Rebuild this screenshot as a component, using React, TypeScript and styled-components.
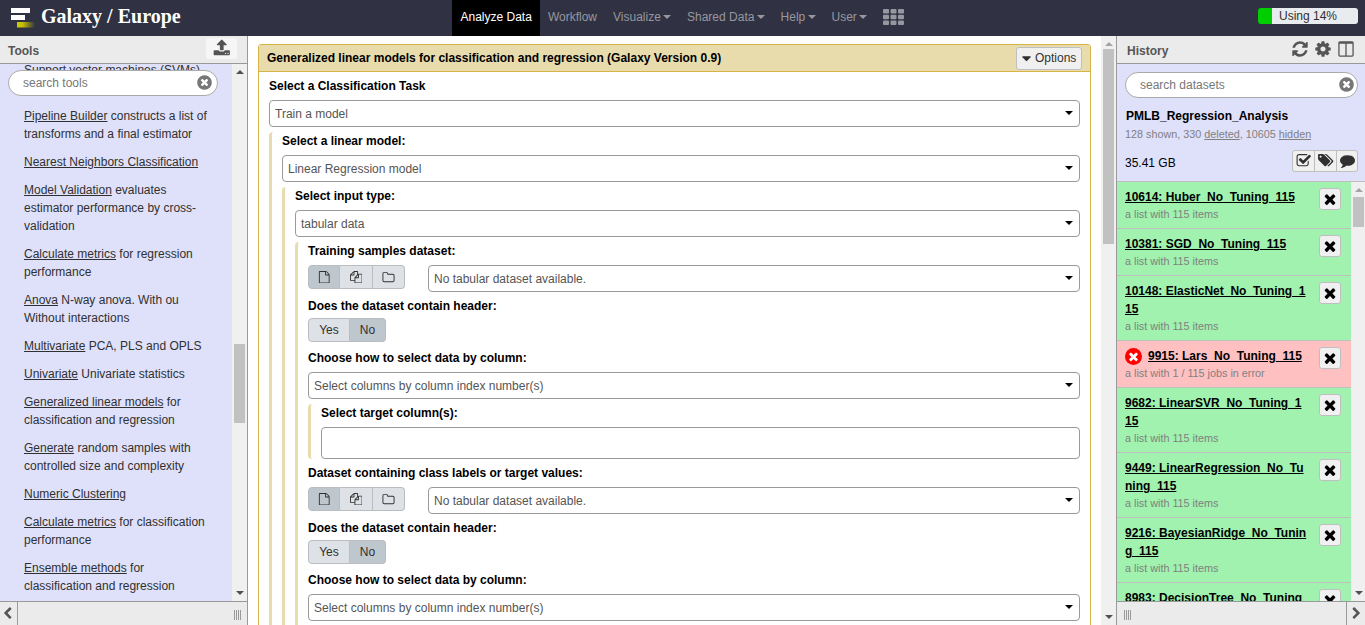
import React from "react";
import styled, { createGlobalStyle, css } from "styled-components";

const GlobalStyle = createGlobalStyle`
  *, *::before, *::after { box-sizing: border-box; }
  html, body { margin: 0; padding: 0; height: 100%; overflow: hidden; }
  body {
    background: #fff;
    color: #303030;
    font-family: "Liberation Sans", Arial, sans-serif;
    font-size: 12px;
    line-height: 18px;
  }
`;

/* ---------- icons ---------- */

const paths = {
  file: "M1596 380q28 28 48 76t20 88v1152q0 40-28 68t-68 28h-1344q-40 0-68-28t-28-68v-1600q0-40 28-68t68-28h896q40 0 88 20t76 48zm-444-244v376h376q-10-29-22-41l-313-313q-12-12-41-22zm384 1528v-1024h-416q-40 0-68-28t-28-68v-416h-768v1536h1280z",
  files: "M1696 384q40 0 68 28t28 68v1216q0 40-28 68t-68 28h-960q-40 0-68-28t-28-68v-288h-544q-40 0-68-28t-28-68v-672q0-40 20-88t48-76l408-408q28-28 76-48t88-20h416q40 0 68 28t28 68v328q68-40 128-40h416zm-544 213l-299 299h299v-299zm-640-384l-299 299h299v-299zm196 647l316-316v-416h-384v416q0 40-28 68t-68 28h-416v640h512v-256q0-40 20-88t48-76zm956 804v-1152h-384v416q0 40-28 68t-68 28h-416v640h896z",
  folder: "M1600 1312v-704q0-40-28-68t-68-28h-704q-40 0-68-28t-28-68v-64q0-40-28-68t-68-28h-320q-40 0-68 28t-28 68v960q0 40 28 68t68 28h1216q40 0 68-28t28-68zm128-704v704q0 92-66 158t-158 66h-1216q-92 0-158-66t-66-158v-960q0-92 66-158t158-66h320q92 0 158 66t66 158v32h672q92 0 158 66t66 158z",
  refresh: "M1639 1056q0 5-1 7-64 268-268 434.5t-478 166.5q-146 0-282.5-55t-243.5-157l-129 129q-19 19-45 19t-45-19-19-45v-448q0-26 19-45t45-19h448q26 0 45 19t19 45-19 45l-137 137q71 66 161 102t187 36q134 0 250-65t186-179q11-17 53-117 8-23 30-23h192q13 0 22.5 9.5t9.5 22.5zm25-800v448q0 26-19 45t-45 19h-448q-26 0-45-19t-19-45 19-45l138-138q-148-137-349-137-134 0-250 65t-186 179q-11 17-53 117-8 23-30 23h-199q-13 0-22.5-9.5t-9.5-22.5v-7q65-268 270-434.5t480-166.5q146 0 284 55.5t245 156.5l130-129q19-19 45-19t45 19 19 45z",
  cog: "M1152 896q0-106-75-181t-181-75-181 75-75 181 75 181 181 75 181-75 75-181zm512-109v222q0 12-8 23t-20 13l-185 28q-19 54-39 91 35 50 107 138 10 12 10 25t-9 23q-27 37-99 108t-94 71q-12 0-26-9l-138-108q-44 23-91 38-16 136-29 186-7 28-36 28h-222q-14 0-24.5-8.5t-11.5-21.5l-28-184q-49-16-90-37l-141 107q-10 9-25 9-14 0-25-11-126-114-165-168-7-10-7-23 0-12 8-23 15-21 51-66.5t54-70.5q-27-50-41-99l-183-27q-13-2-21-12.5t-8-23.5v-222q0-12 8-23t19-13l186-28q14-46 39-92-40-57-107-138-10-12-10-24 0-10 9-23 26-36 98.5-107.5t94.5-71.5q13 0 26 10l138 107q44-23 91-38 16-136 29-186 7-28 36-28h222q14 0 24.5 8.5t11.5 21.5l28 184q49 16 90 37l142-107q9-9 24-9 13 0 25 10 129 119 165 170 7 8 7 22 0 12-8 23-15 21-51 66.5t-54 70.5q26 50 41 98l183 28q13 2 21 12.5t8 23.5z",
  columns: "M288 1536h544v-1152h-576v1120q0 13 9.5 22.5t22.5 9.5zm1248-32v-1120h-576v1152h544q13 0 22.5-9.5t9.5-22.5zm128-1216v1216q0 66-47 113t-113 47h-1216q-66 0-113-47t-47-113v-1216q0-66 47-113t113-47h1216q66 0 113 47t47 113z",
  times: "M1490 1322q0 40-28 68l-136 136q-28 28-68 28t-68-28l-294-294-294 294q-28 28-68 28t-68-28l-136-136q-28-28-28-68t28-68l294-294-294-294q-28-28-28-68t28-68l136-136q28-28 68-28t68 28l294 294 294-294q28-28 68-28t68 28l136 136q28 28 28 68t-28 68l-294 294 294 294q28 28 28 68z",
  timesCircle: "M1277 1122q0-26-19-45l-181-181 181-181q19-19 19-45 0-27-19-46l-90-90q-19-19-46-19-26 0-45 19l-181 181-181-181q-19-19-45-19-27 0-46 19l-90 90q-19 19-19 46 0 26 19 45l181 181-181 181q-19 19-19 45 0 27 19 46l90 90q19 19 46 19 26 0 45-19l181-181 181 181q19 19 45 19 27 0 46-19l90-90q19-19 19-46zm387-226q0 209-103 385.5t-279.5 279.5-385.5 103-385.5-103-279.5-279.5-103-385.5 103-385.5 279.5-279.5 385.5-103 385.5 103 279.5 279.5 103 385.5z",
  tags: "M576 448q0-53-37.5-90.5t-90.5-37.5-90.5 37.5-37.5 90.5 37.5 90.5 90.5 37.5 90.5-37.5 37.5-90.5zm1067 576q0 53-37 90l-491 492q-39 37-91 37-53 0-90-37l-715-716q-38-37-64.5-101t-26.5-117v-416q0-52 38-90t90-38h416q53 0 117 26.5t102 64.5l715 714q37 39 37 91zm384 0q0 53-37 90l-491 492q-39 37-91 37-36 0-59-14t-53-45l470-470q37-37 37-90 0-52-37-91l-715-714q-38-38-102-64.5t-117-26.5h224q53 0 117 26.5t102 64.5l715 714q37 39 37 91z",
  comment: "M1792 896q0 174-120 321.5t-326 233-450 85.5q-70 0-145-8-198 175-460 242-49 14-114 22-17 2-30.5-9t-17.5-29v-1q-3-4-.5-12t2-10 4.5-9.5l6-9 7-8.5 8-9q7-8 31-34.5t34.5-38 31-39.5 32.5-51 27-59 26-76q-157-89-247.5-220t-90.5-281q0-130 71-248.5t191-204.5 286-136.5 348-50.5q244 0 450 85.5t326 233 120 321.5z",
  checkSquare: "M1472 930v318q0 119-84.5 203.5t-203.5 84.5h-832q-119 0-203.5-84.5t-84.5-203.5v-832q0-119 84.5-203.5t203.5-84.5h832q63 0 117 25 15 7 18 23 3 17-9 29l-49 49q-10 10-23 10-3 0-9-2-23-6-45-6h-832q-66 0-113 47t-47 113v832q0 66 47 113t113 47h832q66 0 113-47t47-113v-254q0-13 9-22l64-64q10-10 23-10 6 0 12 3 20 8 20 29zm231-489l-814 814q-24 24-57 24t-57-24l-430-430q-24-24-24-57t24-57l110-110q24-24 57-24t57 24l263 263 647-647q24-24 57-24t57 24l110 110q24 24 24 57t-24 57z",
  upload: "M1344 1472q0-26-19-45t-45-19-45 19-19 45 19 45 45 19 45-19 19-45zm256 0q0-26-19-45t-45-19-45 19-19 45 19 45 45 19 45-19 19-45zm128-224v320q0 40-28 68t-68 28h-1472q-40 0-68-28t-28-68v-320q0-40 28-68t68-28h427q21 56 70.5 92t110.5 36h256q61 0 110.5-36t70.5-92h427q40 0 68 28t28 68zm-325-648q-17 40-59 40h-256v448q0 26-19 45t-45 19h-256q-26 0-45-19t-19-45v-448h-256q-42 0-59-40-17-39 14-69l448-448q18-19 45-19t45 19l448 448q31 30 14 69z",
  left: "M1427 301l-531 531 531 531q19 19 19 45t-19 45l-166 166q-19 19-45 19t-45-19l-742-742q-19-19-19-45t19-45l742-742q19-19 45-19t45 19l166 166q19 19 19 45t-19 45z",
  right: "M1363 877l-742 742q-19 19-45 19t-45-19l-166-166q-19-19-19-45t19-45l531-531-531-531q-19-19-19-45t19-45l166-166q19-19 45-19t45 19l742 742q19 19 19 45t-19 45z",
  caret: "M1408 704q0 26-19 45l-448 448q-19 19-45 19t-45-19l-448-448q-19-19-19-45t19-45 45-19h896q26 0 45 19t19 45z",
};

const Svg = styled.svg`
  display: block;
  flex: none;
  fill: currentColor;
`;

function Icon({ name, size, wide }: { name: keyof typeof paths; size: number; wide?: boolean }) {
  const w = wide ? 2048 : 1792;
  return (
    <Svg width={(size * w) / 1792} height={size} viewBox={`0 0 ${w} 1792`}>
      <path d={paths[name]} />
    </Svg>
  );
}

/* ---------- frame ---------- */

const Page = styled.div`
  display: flex;
  flex-direction: column;
  width: 100%;
  height: 100vh;
  overflow: hidden;
`;

const Masthead = styled.header`
  display: grid;
  grid-template-columns: 452px 1fr auto;
  flex: none;
  height: 36px;
  background: #303143;
`;

const Brand = styled.div`
  display: flex;
  align-items: flex-start;
  padding: 7px 0 0 10px;
  color: #fff;
  font: bold 20px/18px "Liberation Serif", "Times New Roman", serif;

  span { margin-left: 6px; }
`;

const Nav = styled.nav`
  display: flex;
`;

const NavItem = styled.a<{ $active?: boolean }>`
  display: flex;
  align-items: center;
  padding: 0 8px 2px ${(p) => (p.$active ? 8.5 : 8)}px;
  color: ${(p) => (p.$active ? "#fff" : "#97989f")};
  background: ${(p) => (p.$active ? "#000" : "transparent")};
`;

const Caret = styled.span`
  margin-left: 2.6px;
  margin-right: -0.4px;
  margin-top: -1px;
  border: 4px solid transparent;
  border-top-color: currentColor;
  border-bottom: 0;
`;

const Quota = styled.div`
  width: 100px;
  height: 16px;
  margin: 8px 7px 0 0;
  border-radius: 3px;
  overflow: hidden;
  background: linear-gradient(90deg, #00ce00 14%, #e9ecef 14%);
  line-height: 16px;
  text-align: center;
`;

const Body = styled.div`
  display: grid;
  grid-template-columns: 248px 1fr 249px;
  flex: 1;
  min-height: 0;
`;

const Side = styled.aside<{ $edge: "left" | "right" }>`
  display: flex;
  flex-direction: column;
  min-height: 0;
  background: #dfe1fb;
  border-${(p) => p.$edge}: 1px solid #999;
`;

const SideHeader = styled.div<{ $pad: number }>`
  display: flex;
  justify-content: space-between;
  flex: none;
  height: 28px;
  padding-left: ${(p) => p.$pad}px;
  border-bottom: 1px solid #999;
  background: #ebebeb;
  color: #555;

  h2 { margin: 0; padding-top: 6px; font-size: 12px; line-height: 18px; }
`;

const UploadButton = styled.button`
  display: flex;
  justify-content: center;
  align-items: flex-start;
  width: 31px;
  height: 21px;
  margin: 2px 10px 0 0;
  padding: 1px 0 0 1px;
  border: 0;
  border-radius: 3px;
  background: #f6f6f6;
  color: #555;
`;

const HeaderIcons = styled.div`
  display: flex;
  gap: 5px;
  padding: 4px 10px 0 0;
`;

const SideFooter = styled.div<{ $reverse?: boolean }>`
  display: flex;
  flex-direction: ${(p) => (p.$reverse ? "row-reverse" : "row")};
  justify-content: space-between;
  flex: none;
  height: 24px;
  border-top: 1px solid #999;
  background: #ebebeb;
  color: #555;
`;

const Collapse = styled.div<{ $edge: "left" | "right" }>`
  display: flex;
  justify-content: center;
  width: ${(p) => (p.$edge === "right" ? 18 : 19)}px;
  padding-top: 5px;
  padding-${(p) => p.$edge}: ${(p) => (p.$edge === "right" ? 2 : 1)}px;
  border-${(p) => p.$edge}: 1px solid #999;
`;

const Grip = styled.div`
  width: 8px;
  height: 10px;
  margin: 8px 5px 0 7px;
  background: repeating-linear-gradient(90deg, #999 0 1px, transparent 1px 2px);
`;

/* ---------- scrollbar ---------- */

const Track = styled.div`
  display: flex;
  flex-direction: column;
  align-items: center;
  flex: none;
  width: 15px;
  background: #f0f0f0;
`;

const Arrow = styled.span<{ $down?: boolean; $dim?: boolean }>`
  flex: none;
  height: 4px;
  margin: ${(p) => (p.$down ? "auto 0 6px" : "6px 0 0")};
  border: 4px solid transparent;
  ${(p) => {
    const color = p.$dim ? "#a3a3a3" : "#505050";
    return p.$down
      ? css`border-bottom: 0; border-top-color: ${color};`
      : css`border-top: 0; border-bottom-color: ${color};`;
  }}
`;

const Thumb = styled.span<{ $gap: number; $height: number }>`
  flex: none;
  width: 11px;
  height: ${(p) => p.$height}px;
  margin-top: ${(p) => p.$gap}px;
  background: #c1c1c1;
`;

function Scrollbar({ gap, height, atTop }: { gap: number; height: number; atTop?: boolean }) {
  return (
    <Track>
      <Arrow $dim={atTop} />
      <Thumb $gap={gap} $height={height} />
      <Arrow $down />
    </Track>
  );
}

/* ---------- search ---------- */

const SearchBox = styled.div<{ $end: number }>`
  display: flex;
  justify-content: space-between;
  align-items: center;
  height: 26px;
  padding: 0 ${(p) => p.$end}px 0 14px;
  border: 1px solid #aaa;
  border-radius: 13px;
  background: #fff;
  color: #777;

  svg { margin-top: -1px; }
`;

function Search({ label, end }: { label: string; end: number }) {
  return (
    <SearchBox $end={end}>
      <span>{label}</span>
      <Icon name="timesCircle" size={17} />
    </SearchBox>
  );
}

/* ---------- tools ---------- */

const ToolsBody = styled.div`
  position: relative;
  display: flex;
  flex: 1;
  min-height: 0;
`;

const ToolSearch = styled.div`
  position: absolute;
  top: 6px;
  left: 8px;
  width: 210px;
`;

const ToolList = styled.div`
  flex: 1;
  overflow: hidden;
  padding-left: 24px;
`;

const Tool = styled.div`
  margin-bottom: 10px;
  white-space: nowrap;

  &:first-child { margin-top: -3px; }
  a { text-decoration: underline; }
`;

const tools: { link: string; rest: string[] }[] = [
  { link: "Support vector machines (SVMs)", rest: ["", ""] },
  { link: "Pipeline Builder", rest: [" constructs a list of", "transforms and a final estimator"] },
  { link: "Nearest Neighbors Classification", rest: [""] },
  { link: "Model Validation", rest: [" evaluates", "estimator performance by cross-", "validation"] },
  { link: "Calculate metrics", rest: [" for regression", "performance"] },
  { link: "Anova", rest: [" N-way anova. With ou", "Without interactions"] },
  { link: "Multivariate", rest: [" PCA, PLS and OPLS"] },
  { link: "Univariate", rest: [" Univariate statistics"] },
  { link: "Generalized linear models", rest: [" for", "classification and regression"] },
  { link: "Generate", rest: [" random samples with", "controlled size and complexity"] },
  { link: "Numeric Clustering", rest: [""] },
  { link: "Calculate metrics", rest: [" for classification", "performance"] },
  { link: "Ensemble methods", rest: [" for", "classification and regression"] },
];

function Lines({ lines }: { lines: string[] }) {
  return (
    <>
      {lines.map((line, i) => (
        <React.Fragment key={i}>
          {i > 0 && <br />}
          {line || (i > 0 ? "\u00a0" : "")}
        </React.Fragment>
      ))}
    </>
  );
}

/* ---------- tool form ---------- */

const Center = styled.main`
  display: flex;
  min-width: 0;
  min-height: 0;
  background: #fff;
`;

const FormArea = styled.div`
  flex: 1;
  overflow: hidden;
  padding: 8px 10px 0;
`;

const Card = styled.section`
  height: 700px;
  border: 1px solid #d6b446;
  border-radius: 3px;
`;

const CardHeader = styled.div`
  display: flex;
  justify-content: space-between;
  height: 27px;
  padding: 2px 8px 0;
  border-bottom: 1px solid #d6b446;
  background: #e8dbac;
  color: #000;
  font-weight: bold;

  & > span { padding-top: 2px; }
`;

const OptionsButton = styled.button`
  display: flex;
  align-items: center;
  width: 66px;
  height: 23px;
  padding: 0 0 1px 2px;
  gap: 1px;
  border: 1px solid #bfbfbf;
  border-radius: 3px;
  background: #f0f0f0;
  color: #303030;
  font: 12px/18px "Liberation Sans", Arial, sans-serif;
`;

const CardBody = styled.div`
  padding: 5px 10px;
`;

const Field = styled.div<{ $toggle?: boolean }>`
  display: flex;
  flex-direction: column;
  gap: ${(p) => (p.$toggle ? 3 : 5)}px;
  margin-bottom: ${(p) => (p.$toggle ? 7 : 5)}px;
`;

const Label = styled.label`
  color: #000;
  font-weight: bold;
`;

const SelectBox = styled.div`
  display: flex;
  justify-content: space-between;
  align-items: center;
  flex: 1;
  height: 27px;
  min-height: 27px;
  padding: 0 6.5px 0 5px;
  border: 1px solid #999;
  border-radius: 4px;
  color: #555;
`;

const SelectArrow = styled.span`
  margin-top: -2px;
  border: 4px solid transparent;
  border-top-color: #000;
  border-bottom: 0;
`;

const TextBox = styled.div`
  height: 32px;
  border: 1px solid #999;
  border-radius: 4px;
`;

const Group = styled.div`
  margin-bottom: 5px;
  padding-left: 10px;
  border-left: 3px solid #e8dbac;
  border-radius: 4px;

  & > :last-child { margin-bottom: 0; }
`;

const DataRow = styled.div`
  display: flex;
  gap: 23px;
`;

const ButtonGroup = styled.div`
  display: flex;
  height: 24px;
`;

const GroupButton = styled.button<{ $active?: boolean; $width: number }>`
  display: flex;
  align-items: center;
  justify-content: center;
  width: ${(p) => p.$width}px;
  height: 24px;
  padding: 0;
  border: 1px solid #b9bdc2;
  background: ${(p) => (p.$active ? "#bec6ce" : "#dee1e5")};
  color: #303030;
  font: 12px/18px "Liberation Sans", Arial, sans-serif;

  & + & { border-left-width: 0; }
  &:first-child { border-radius: 4px 0 0 4px; }
  &:last-child { border-radius: 0 4px 4px 0; }
`;

function Select({ value }: { value: string }) {
  return (
    <SelectBox>
      <span>{value}</span>
      <SelectArrow />
    </SelectBox>
  );
}

function SelectField({ label, value }: { label: string; value: string }) {
  return (
    <Field>
      <Label>{label}</Label>
      <Select value={value} />
    </Field>
  );
}

function DatasetField({ label }: { label: string }) {
  return (
    <Field>
      <Label>{label}</Label>
      <DataRow>
        <ButtonGroup>
          <GroupButton $width={32} $active><Icon name="file" size={12.5} /></GroupButton>
          <GroupButton $width={33}><Icon name="files" size={12.5} /></GroupButton>
          <GroupButton $width={32}><Icon name="folder" size={13} /></GroupButton>
        </ButtonGroup>
        <Select value="No tabular dataset available." />
      </DataRow>
    </Field>
  );
}

function HeaderToggle() {
  return (
    <Field $toggle>
      <Label>Does the dataset contain header:</Label>
      <ButtonGroup>
        <GroupButton $width={42}>Yes</GroupButton>
        <GroupButton $width={36} $active>No</GroupButton>
      </ButtonGroup>
    </Field>
  );
}

const columnChoice = (
  <SelectField label="Choose how to select data by column:" value="Select columns by column index number(s)" />
);

/* ---------- history ---------- */

const Summary = styled.div`
  flex: none;
  height: 118px;
  padding: 8px 7px 0 8px;
  border-bottom: 1px solid #bfbfbf;
`;

const HistoryName = styled.div`
  margin: 9px 0 0 1px;
  color: #000;
  font-weight: bold;
`;

const Muted = styled.div`
  color: #808080;
  font-size: 10.8px;
`;

const SizeRow = styled.div`
  display: flex;
  justify-content: space-between;
  align-items: flex-start;
  margin-top: 7px;
  color: #000;

  & > span { padding-top: 4px; }
`;

const Actions = styled.div`
  display: grid;
  grid-template-columns: 21px 22px 21px;
  width: 66px;
  height: 22px;
  border: 1px solid #bfbfbf;
  border-radius: 3px;
  background: #f0f0f0;
  color: #303030;
`;

const Action = styled.div<{ $raise?: number }>`
  display: flex;
  align-items: center;
  justify-content: center;
  padding-bottom: ${(p) => p.$raise ?? 0}px;

  & + & { border-left: 1px solid #bfbfbf; }
`;

const HistoryBody = styled.div`
  display: flex;
  flex: 1;
  min-height: 0;
  margin-right: -1px;
`;

const HistoryList = styled.div`
  flex: 1;
  overflow: hidden;
`;

const Item = styled.div<{ $error?: boolean }>`
  display: flex;
  justify-content: space-between;
  padding: 6px 10px 6px 8px;
  border-bottom: 1px solid #bfbfbf;
  background: ${(p) => (p.$error ? "#ffc0c1" : "#a0f2ae")};
  white-space: nowrap;
`;

const ItemTitle = styled.div`
  display: flex;
  align-items: center;
  color: #000;
  font-weight: bold;
`;

const ErrorBadge = styled.span`
  display: flex;
  align-items: center;
  justify-content: center;
  width: 17px;
  height: 17px;
  margin-right: 6px;
  border-radius: 50%;
  background: #f00;
  color: #fff;
`;

const ItemInfo = styled.div`
  color: #808080;
  font-size: 10.8px;
  line-height: 16px;
`;

const DeleteButton = styled.button`
  display: flex;
  align-items: center;
  justify-content: center;
  width: 22px;
  height: 22px;
  padding: 0 1px 0 0;
  border: 1px solid #bfbfbf;
  border-radius: 3px;
  background: #f0f0f0;
  color: #000;
`;

const items: { title: string[]; info?: string; error?: boolean }[] = [
  { title: ["10614: Huber_No_Tuning_115"] },
  { title: ["10381: SGD_No_Tuning_115"] },
  { title: ["10148: ElasticNet_No_Tuning_1", "15"] },
  { title: ["9915: Lars_No_Tuning_115"], info: "a list with 1 / 115 jobs in error", error: true },
  { title: ["9682: LinearSVR_No_Tuning_1", "15"] },
  { title: ["9449: LinearRegression_No_Tu", "ning_115"] },
  { title: ["9216: BayesianRidge_No_Tunin", "g_115"] },
  { title: ["8983: DecisionTree_No_Tuning"] },
];

export default function App() {
  return (
    <Page>
      <GlobalStyle />
      <Masthead>
        <Brand>
          <Svg width="25" height="21" viewBox="0 0 25 21">
            <defs>
              <linearGradient id="fade">
                <stop offset="0" stopColor="#cfc900" />
                <stop offset="0.3" stopColor="#c6c000" />
                <stop offset="1" stopColor="#303143" />
              </linearGradient>
            </defs>
            <rect x="1" y="1" width="19" height="5" fill="#fff" />
            <rect x="1" y="8" width="14" height="5" fill="#fff" />
            <rect x="7" y="15" width="18" height="5.5" fill="url(#fade)" />
          </Svg>
          <span>Galaxy / Europe</span>
        </Brand>
        <Nav>
          <NavItem $active>Analyze Data</NavItem>
          <NavItem>Workflow</NavItem>
          <NavItem>Visualize<Caret /></NavItem>
          <NavItem>Shared Data<Caret /></NavItem>
          <NavItem>Help<Caret /></NavItem>
          <NavItem>User<Caret /></NavItem>
          <NavItem>
            <Svg width="21" height="16" viewBox="0 0 21 16">
              {[0, 5.75, 11.5].map((y) =>
                [0, 7.5, 15].map((x) => <rect key={`${x}-${y}`} x={x} y={y} width="6" height="4.5" rx="1" />)
              )}
            </Svg>
          </NavItem>
        </Nav>
        <Quota>Using 14%</Quota>
      </Masthead>

      <Body>
        <Side $edge="right">
          <SideHeader $pad={8}>
            <h2>Tools</h2>
            <UploadButton><Icon name="upload" size={17.5} /></UploadButton>
          </SideHeader>
          <ToolsBody>
            <ToolList>
              {tools.map((t, i) => (
                <Tool key={i}>
                  <a>{t.link}</a>
                  <Lines lines={t.rest} />
                </Tool>
              ))}
            </ToolList>
            <Scrollbar gap={270} height={79} />
            <ToolSearch><Search label="search tools" end={4} /></ToolSearch>
          </ToolsBody>
          <SideFooter>
            <Collapse $edge="right"><Icon name="left" size={13} /></Collapse>
            <Grip />
          </SideFooter>
        </Side>

        <Center>
          <FormArea>
            <Card>
              <CardHeader>
                <span>Generalized linear models for classification and regression (Galaxy Version 0.9)</span>
                <OptionsButton><Icon name="caret" size={15} />Options</OptionsButton>
              </CardHeader>
              <CardBody>
                <SelectField label="Select a Classification Task" value="Train a model" />
                <Group>
                  <SelectField label="Select a linear model:" value="Linear Regression model" />
                  <Group>
                    <SelectField label="Select input type:" value="tabular data" />
                    <Group>
                      <DatasetField label="Training samples dataset:" />
                      <HeaderToggle />
                      {columnChoice}
                      <Group>
                        <Field>
                          <Label>Select target column(s):</Label>
                          <TextBox />
                        </Field>
                      </Group>
                      <DatasetField label="Dataset containing class labels or target values:" />
                      <HeaderToggle />
                      {columnChoice}
                      <Group>
                        <TextBox />
                      </Group>
                    </Group>
                  </Group>
                </Group>
              </CardBody>
            </Card>
          </FormArea>
          <Scrollbar gap={3} height={195} atTop />
        </Center>

        <Side $edge="left">
          <SideHeader $pad={10}>
            <h2>History</h2>
            <HeaderIcons>
              <Icon name="refresh" size={18} />
              <Icon name="cog" size={18} />
              <Icon name="columns" size={18} />
            </HeaderIcons>
          </SideHeader>
          <Summary>
            <Search label="search datasets" end={2} />
            <HistoryName>PMLB_Regression_Analysis</HistoryName>
            <Muted>128 shown, 330 <u>deleted</u>, 10605 <u>hidden</u></Muted>
            <SizeRow>
              <span>35.41 GB</span>
              <Actions>
                <Action><Icon name="checkSquare" size={15.5} /></Action>
                <Action $raise={1}><Icon name="tags" size={14.5} wide /></Action>
                <Action $raise={2}><Icon name="comment" size={15} /></Action>
              </Actions>
            </SizeRow>
          </Summary>
          <HistoryBody>
            <HistoryList>
              {items.map((item, i) => (
                <Item key={i} $error={item.error}>
                  <div>
                    <ItemTitle>
                      {item.error && <ErrorBadge><Icon name="times" size={13} /></ErrorBadge>}
                      <u><Lines lines={item.title} /></u>
                    </ItemTitle>
                    {i < items.length - 1 && <ItemInfo>{item.info ?? "a list with 115 items"}</ItemInfo>}
                  </div>
                  <DeleteButton><Icon name="times" size={16} /></DeleteButton>
                </Item>
              ))}
            </HistoryList>
            <Scrollbar gap={5} height={30} atTop />
          </HistoryBody>
          <SideFooter $reverse>
            <Collapse $edge="left"><Icon name="right" size={13} /></Collapse>
            <Grip />
          </SideFooter>
        </Side>
      </Body>
    </Page>
  );
}
